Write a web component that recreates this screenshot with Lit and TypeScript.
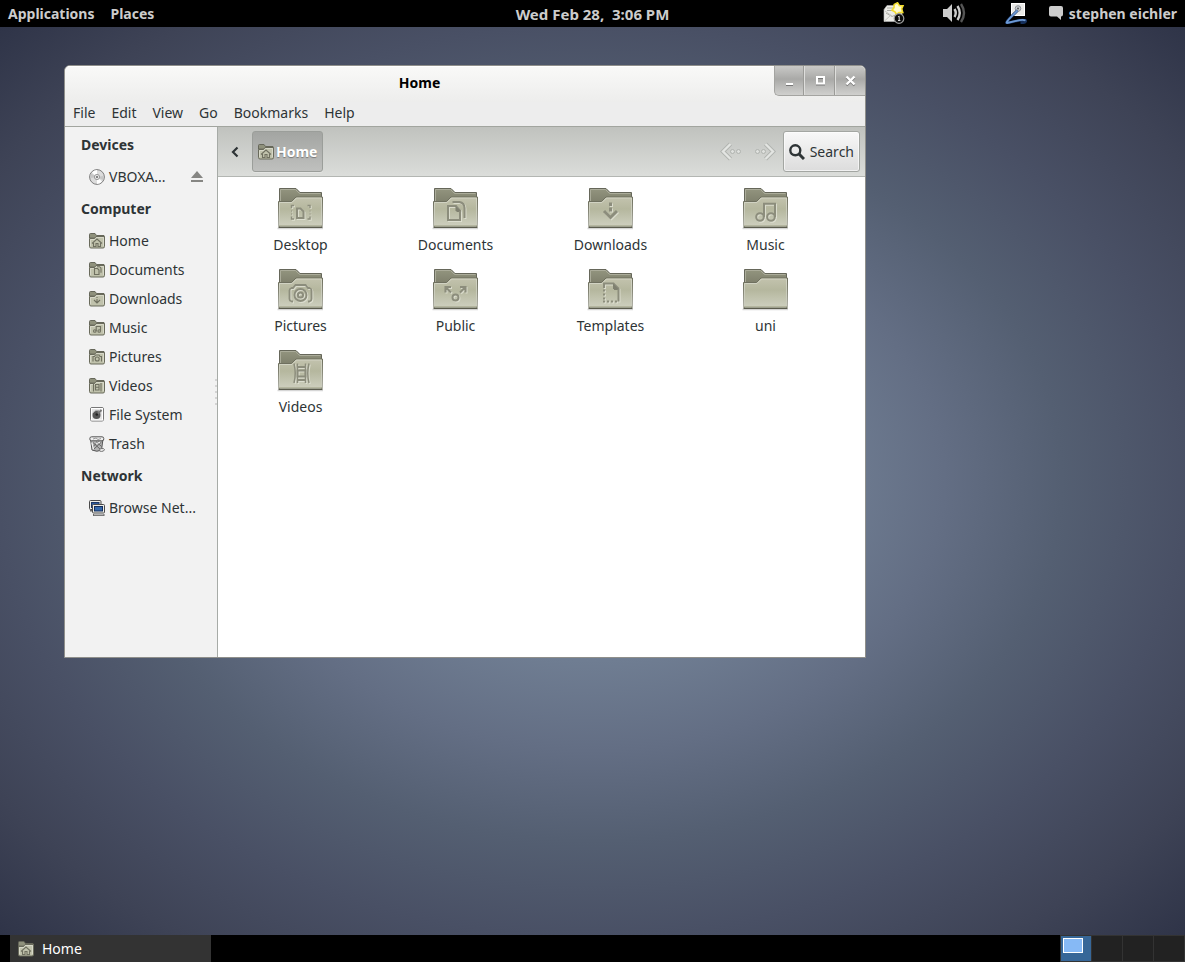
import { LitElement, html, svg, css, type TemplateResult } from "lit";
import { customElement } from "lit/decorators.js";

/* ---------- folder emblems, drawn on a 48 x 48 grid ---------- */
const emblems: Record<string, TemplateResult> = {
  desktop: svg`<path d="M15.500 24v-2.500h2.500M31.500 21.500h2.500v2.500M15.500 32.500v2.500h2.500M31.500 35h2.500v-2.500" stroke-width="1.400"/><path d="M15.500 26.500v4M34 26.500v4" stroke-width="1" stroke-dasharray="1 2"/><path d="M21 24.500h3.500l3 3v6.500h-6.500z" stroke-width="2"/>`,
  documents: svg`<path d="M17 22h8l4 4.500v9.500h-12z" stroke-width="2"/><path d="M24.500 22v5h5z" fill="#7f8070" stroke="none"/><path d="M21.500 18h7q5 1 5 6v10" stroke-width="2"/>`,
  downloads: svg`<path d="M24.500 18.500v3.500M24.500 23.500v4" stroke-width="3"/><path d="M18 27l6.500 6.500l6.500-6.500" stroke-width="3"/>`,
  music: svg`<circle cx="19" cy="33" r="3.800" stroke-width="2"/><circle cx="30" cy="33" r="3.800" stroke-width="2"/><path d="M23 33v-13.300h11v13.300" stroke-width="2"/>`,
  pictures: svg`<path d="M17 36.500h-1.500q-2-.5-2-2.500v-8.500q0-2 2-2.500h1.500l2.500-3h10l2.500 3h1.500q2 .5 2 2.500v8.500q0 2-2 2.500h-1.500" stroke-width="1.800"/><circle cx="24.500" cy="30" r="6" stroke-width="1.800"/><circle cx="24.500" cy="30" r="2.600" stroke-width="2"/>`,
  public: svg`<circle cx="24.500" cy="32.500" r="3" stroke-width="1.900"/><path d="M20 27.500l-5-5M14.500 27.500v-5.500h5.500M29 27.500l5-5M29 22h5.500v5.500" stroke-width="2.100"/>`,
  templates: svg`<path d="M18 23v-4.500h9.500l5 5v13" stroke-width="2"/><path d="M27 18.500v5.500h5.500z" fill="#7f8070" stroke="none"/><path d="M18 24.500v11" stroke-width="2" stroke-dasharray="2 2"/><path d="M17 36.500h15" stroke-width="2" stroke-dasharray="2 2"/>`,
  videos: svg`<path d="M18 17.500q2.500 10 0 19.500M33 17.500q-2.500 10 0 19.500" stroke-width="1.500"/><path d="M21.500 17.500v19.500M29.500 17.500v19.500" stroke-width="1.500"/><path d="M21.500 21h8M21.500 24.500h8v6h-8zM21.500 34h8" stroke-width="1.900"/>`,
  plain: svg``,
};

/* ---------- the same emblems on a 16 x 16 grid ---------- */
const smallEmblems: Record<string, TemplateResult> = {
  home: svg`<path d="M3 10.500l5-4.500l5 4.500M4.500 10v3.500h2.500v-3h2v3h2.500v-3.500"/>`,
  documents: svg`<path d="M5.500 6.500h3l1.500 1.500v4.500h-4.500zM8 4.800h2.500q1.500.5 1.500 2v4"/>`,
  downloads: svg`<path d="M8 6v1M8 8v3M5 9l3 3l3-3"/>`,
  music: svg`<circle cx="5.800" cy="11" r="1.300"/><circle cx="10.200" cy="11" r="1.300"/><path d="M7.200 11v-4.500h4.300v4.500"/>`,
  pictures: svg`<path d="M4 12.500v-5h1.500l1-1.500h3.500l1 1.500h1.500v5"/><circle cx="8.200" cy="10" r="2"/>`,
  videos: svg`<path d="M4.500 5v8.500M12 5v8.500"/><path d="M6.500 6.500h3.500v5.500h-3.500zM6.500 9.200h3.500"/>`,
};

const folder = (kind: string) => svg`
  <svg class="folder" width="48" height="48" viewBox="1 0 48 48" aria-hidden="true">
    <defs>
      <linearGradient id="front" x1="0" y1="0" x2="0" y2="1">
        <stop offset="0" stop-color="#c3c3ae"/><stop offset=".4" stop-color="#b5b79e"/>
        <stop offset=".8" stop-color="#c6c8b5"/><stop offset="1" stop-color="#cfd0c0"/>
      </linearGradient>
      <linearGradient id="back" x1="0" y1="0" x2="0" y2="1">
        <stop offset="0" stop-color="#93957f"/><stop offset="1" stop-color="#7b7c69"/>
      </linearGradient>
    </defs>
    <path d="M1.500 44.500h45.500" stroke="#000" stroke-opacity=".16" stroke-width="1.500"/>
    <path d="M3.500 20v-15.500h16.500l4 4h21.500v12z" fill="url(#back)" stroke="#66675a"/>
    <path d="M4.500 20v-14.500h15l4 4h21" fill="none" stroke="#abac9a"/>
    <path d="M2.500 17.500h13l4.500-4.500h26.500l-.5 30h-43z" fill="url(#front)" stroke="#6f705f"/>
    <path d="M3.500 41v-22.500h12.500l4.500-4.500h25v27" fill="none" stroke="#dadbce" stroke-opacity=".7"/>
    <path d="M3 41.500h42.500" stroke="#b4b69f" stroke-width="1"/>
    <path d="M2.500 43.500h44" stroke="#5b5c4e" stroke-width="1"/>
    <g fill="none" stroke="#e2e3d7" stroke-opacity=".8" transform="translate(1 1)">${emblems[kind]}</g>
    <g fill="none" stroke="#8c8d7c">${emblems[kind]}</g>
  </svg>`;

const smallFolder = (kind: string) => svg`
  <svg class="glyph" width="16" height="16" viewBox="0 0 16 16" aria-hidden="true">
    <path d="M.5 5v-3.500q0-1 1-1h4.500l1.500 2h7.500v3z" fill="#8f917c" stroke="#66675a"/>
    <path d="M.5 5.500h5l1.500-2h8.500v10q0 1.500-1.500 1.500h-12q-1.500 0-1.500-1.500z" fill="#c0c2ac" stroke="#696a5b"/>
    <path d="M1.500 13v-6.500h4.500l1.500-2h7v8.500" fill="none" stroke="#dcddd0" stroke-opacity=".8"/>
    <g fill="none" stroke="#6f7060" stroke-width="1.100">${smallEmblems[kind]}</g>
  </svg>`;

const discIcon = svg`
  <svg class="glyph" width="16" height="16" viewBox="0 0 16 16" aria-hidden="true">
    <circle cx="8" cy="8" r="7.400" fill="#dcdcdc" stroke="#7d7d7d"/>
    <path d="M8 8L3 3.500A7 7 0 0 1 8 1zM8 8l5 4.500A7 7 0 0 1 8 15z" fill="#fff"/>
    <path d="M8 8L1.500 9A7 7 0 0 1 2 4.500zM8 8l6.500-1A7 7 0 0 1 14 11z" fill="#c6c6c6"/>
    <circle cx="8" cy="8" r="2.600" fill="#e8e8e8" stroke="#9a9a9a"/>
    <circle cx="8" cy="8" r="1" fill="#666"/>
  </svg>`;

const driveIcon = svg`
  <svg class="glyph" width="16" height="16" viewBox="0 0 16 16" aria-hidden="true">
    <rect x="1.500" y=".5" width="13" height="13.500" rx="1.500" fill="#e4e4e4" stroke="#777"/>
    <rect x="2.500" y="1.500" width="11" height="11.500" fill="none" stroke="#fff"/>
    <ellipse cx="7.500" cy="8" rx="4" ry="4" fill="#555"/>
    <path d="M8 7.500l4.500-4.500" stroke="#777" stroke-width="2"/>
    <circle cx="7.800" cy="7.500" r="1.300" fill="#222"/>
    <path d="M4 6q2-4 6-2.500" fill="none" stroke="#aaa"/>
  </svg>`;

const trashIcon = svg`
  <svg class="glyph" width="16" height="16" viewBox="0 0 16 16" aria-hidden="true">
    <path d="M1.500 3l1.500 11q5 2.500 9.500 0l1.500-11z" fill="#b4b4b4" stroke="#555"/>
    <rect x=".8" y=".8" width="14" height="4" rx="1.800" fill="#eee" stroke="#555"/>
    <path d="M4 3l3-1l2 1.500l3-1" fill="none" stroke="#999"/>
    <path d="M4 6.500l8 7.500M7 5.500l5.500 5M12.500 6l-8 7.500M9.500 5.500l-6 5.500" stroke="#5c5c5c" stroke-width=".9"/>
    <path d="M2.800 6.500l1.700 7M7 7.500l4-1" stroke="#f5f5f5" stroke-width="1.200"/>
    <path d="M10.500 15q-.5-2 1.500-2.500q3-.5 3.500 1q-.5 2-3 2z" fill="#e4e4e4" stroke="#777"/>
  </svg>`;

const networkIcon = svg`
  <svg class="glyph" width="16" height="16" viewBox="0 0 16 16" aria-hidden="true">
    <path d="M1 10.500h6" stroke="#666" stroke-width="2"/>
    <rect x=".5" y=".5" width="11.500" height="9" rx="1" fill="#eeeee8" stroke="#4a4a4a"/>
    <rect x="2.500" y="2.500" width="7.500" height="5" fill="#2d5a9c" stroke="#1d3763"/>
    <rect x="3.500" y="4.500" width="12" height="8.500" rx="1" fill="#eeeee8" stroke="#4a4a4a"/>
    <rect x="5.500" y="6.500" width="8" height="4.500" fill="#3468ab" stroke="#152f5c"/>
    <path d="M4 15h11.500" stroke="#5a5a5a" stroke-width="1.800"/><path d="M5 14.700h9.500" stroke="#ddd" stroke-width=".8"/>
  </svg>`;

const ejectIcon = svg`
  <svg width="12" height="12" viewBox="0 0 12 12" aria-hidden="true">
    <path d="M0 7L6 0l6 7z" fill="#868683"/><path d="M0 9h12v2H0z" fill="#868683"/>
  </svg>`;

const mailIcon = svg`
  <svg width="22" height="22" viewBox="0 0 22 22" aria-hidden="true">
    <path d="M1 7.500l3-4h13l2 4v12h-18z" fill="#ecece8" stroke="#bbb" stroke-width=".6"/>
    <path d="M4 6h10M4 8.500h10M3 11l6 3.500l8-3.500" fill="none" stroke="#a9a9a4"/>
    <path d="M1.500 19l6.500-6M2 9l7 5" stroke="#c4c4be"/>
    <path d="M14.500 .8l1.900 2.800l3.600.1l-1.400 3.200l1.200 3.500l-3.800.2l-2.500 1.700l-1.600-2.500l-2.900-1.600l2-2.600l.2-3.200z" fill="#fffbd0" stroke="#f3dc2d" stroke-width="1.600"/>
    <circle cx="16" cy="16.500" r="4.800" fill="#0b0b0b" stroke="#9b9b9b" stroke-width="1.200"/>
    <path d="M15 15l1.200-.8v4.300M15 18.500h2.400" fill="none" stroke="#ddd"/>
  </svg>`;

const volumeIcon = svg`
  <svg width="24" height="20" viewBox="0 0 24 20" aria-hidden="true">
    <path d="M0 6h4l5-5v18l-5-5h-4z" fill="#ccc"/>
    <path d="M11.500 6q2.500 4 0 8" fill="none" stroke="#ccc" stroke-width="2.400"/>
    <path d="M14.500 3q4.500 7 0 14" fill="none" stroke="#ccc" stroke-width="2.400"/>
    <path d="M18 1q6 9 0 18" fill="none" stroke="#555" stroke-width="2.400"/>
  </svg>`;

const tabletIcon = svg`
  <svg width="22" height="22" viewBox="0 0 22 22" aria-hidden="true">
    <rect x="6.500" y="1.500" width="13" height="12" fill="#e9e9e6" stroke="#fff"/>
    <circle cx="13" cy="6.500" r="2.800" fill="#c9ccd0" stroke="#8d9196"/>
    <circle cx="13" cy="6.500" r="1" fill="#555"/>
    <path d="M12.500 8.500l-8 8q-4 4.500-2.500 4.500l9-2q7-1.500 9.500-.5q1 2-5 2.500" fill="none" stroke="#16305c" stroke-width="2.800"/>
    <path d="M12.500 8.500l-8 8q-4 4.500-2.500 4.500l9-2q7-2 9.500-.5" fill="none" stroke="#6d9ad6" stroke-width="1.800"/>
  </svg>`;

const chatIcon = svg`
  <svg width="14" height="14" viewBox="0 0 14 14" aria-hidden="true">
    <path d="M2 0h10q2 0 2 2v6.500q0 2-2 2v3.500l-4-3.500h-6q-2 0-2-2v-6.500q0-2 2-2z" fill="#ccc"/>
  </svg>`;

const backIcon = svg`
  <svg width="8" height="12" viewBox="0 0 8 12" aria-hidden="true">
    <path d="M6.500 1.500L2 6l4.500 4.500" fill="none" stroke="#2e3436" stroke-width="2.200"/>
  </svg>`;

const arrowHead = svg`<path d="M10.500 2L3 9.500L10.500 17"/>`;
const navArrow = (forward: boolean) => svg`
  <svg width="22" height="20" viewBox="0 0 22 20" aria-hidden="true">
    <g fill="none" transform=${forward ? "translate(22 0) scale(-1 1)" : "translate(0 0)"}>
      <g stroke="#b0b3af" stroke-width="4.200">${arrowHead}</g>
      <g stroke="#e3e5e2" stroke-width="2.400">${arrowHead}</g>
      <circle cx="12.500" cy="9.500" r="2" fill="#dfe1de" stroke="#b0b3af"/>
      <circle cx="18.500" cy="9.500" r="2" fill="#dfe1de" stroke="#b0b3af"/>
    </g>
  </svg>`;

const searchIcon = svg`
  <svg width="16" height="16" viewBox="0 0 16 16" aria-hidden="true">
    <circle cx="6.300" cy="6.300" r="5" fill="none" stroke="#2e3436" stroke-width="2.400"/>
    <path d="M10 10l5 5" stroke="#2e3436" stroke-width="3"/>
  </svg>`;

const windowGlyphs: Array<[string, TemplateResult]> = [
  ["Minimize", svg`<path d="M2 8h7v2h-7z" fill="#fff"/>`],
  ["Maximize", svg`<path d="M2 2h7v6.500h-7z" fill="none" stroke="#fff" stroke-width="2"/>`],
  ["Close", svg`<path d="M1.500 1.500l8 8M9.500 1.500l-8 8" stroke="#fff" stroke-width="2.400"/>`],
];

const menus = ["File", "Edit", "View", "Go", "Bookmarks", "Help"];

const places: Array<{ title: string; rows: Array<{ label: string; icon: TemplateResult; eject?: boolean }> }> = [
  { title: "Devices", rows: [{ label: "VBOXA...", icon: discIcon, eject: true }] },
  {
    title: "Computer",
    rows: [
      { label: "Home", icon: smallFolder("home") },
      { label: "Documents", icon: smallFolder("documents") },
      { label: "Downloads", icon: smallFolder("downloads") },
      { label: "Music", icon: smallFolder("music") },
      { label: "Pictures", icon: smallFolder("pictures") },
      { label: "Videos", icon: smallFolder("videos") },
      { label: "File System", icon: driveIcon },
      { label: "Trash", icon: trashIcon },
    ],
  },
  { title: "Network", rows: [{ label: "Browse Net...", icon: networkIcon }] },
];

const files: Array<[string, string]> = [
  ["Desktop", "desktop"], ["Documents", "documents"], ["Downloads", "downloads"], ["Music", "music"],
  ["Pictures", "pictures"], ["Public", "public"], ["Templates", "templates"], ["uni", "plain"],
  ["Videos", "videos"],
];

const reset = css`
  * { box-sizing: border-box; }
  button {
    font: inherit; color: inherit; background: none; border: 0; margin: 0; padding: 0;
  }
  a { color: inherit; text-decoration: none; }
  svg { display: block; flex: none; }
`;

@customElement("file-window")
export class FileWindow extends LitElement {
  static styles = [reset, css`
    :host {
      display: flex; flex-direction: column;
      border: 1px solid #8f8f8b; border-radius: 6px 6px 0 0;
      background: #ededed; color: #2e3436; overflow: hidden;
    }
    .titlebar {
      display: flex; height: 36px; flex: none;
      background: linear-gradient(#f9f9f8, #ededec);
      box-shadow: inset 0 1px #fff;
    }
    .title {
      flex: 1; margin: 0; text-align: center; font-size: 14px; line-height: 34px; font-weight: 700;
      color: #000;
    }
    .controls {
      display: flex; height: 30px; border: 1px solid #a4a4a1; border-width: 0 0 1px 1px;
      border-radius: 0 0 0 5px; overflow: hidden;
      background: linear-gradient(#c9c9c7, #a9a9a7 45%, #b4b4b2 60%, #d0d0ce);
    }
    .control { width: 29px; display: grid; place-items: center; }
    .control + .control { width: 31px; border-left: 1px solid #dededc; box-shadow: -1px 0 #9b9b98; }
    .control + .control + .control { width: 30px; }
    .control svg { filter: drop-shadow(0 1px 0 #777); }
    .menubar { display: flex; height: 25px; flex: none; border-bottom: 1px solid #a2a59f; }
    .menu { padding: 0 8px; height: 22px; line-height: 22px; }
    .body { display: flex; flex: 1; min-height: 0; }
    .sidebar {
      position: relative; width: 153px; flex: none; background: #f2f2f2; border-right: 1px solid #a7aba7;
    }
    .heading { margin: 0; padding-left: 16px; font-size: 14px; line-height: 36px; height: 35px; font-weight: 700; }
    .row { display: flex; align-items: center; height: 29px; padding: 0 14px 0 24px; }
    .place { display: flex; flex: 1; align-items: center; gap: 4px; white-space: nowrap; line-height: 28px; }
    .grip {
      position: absolute; right: 0; top: calc(50% - 13px); width: 2px; height: 26px;
      background: repeating-linear-gradient(#d4d4d4 0 2px, transparent 2px 6px);
    }
    .main { display: flex; flex-direction: column; flex: 1; min-width: 0; background: #fff; }
    .toolbar {
      display: flex; align-items: center; height: 50px; flex: none; padding: 0 5px 0 0;
      border-bottom: 1px solid #b3b6b2; background: linear-gradient(#c0c2be, #dbddda);
    }
    .back { width: 34px; height: 40px; display: grid; place-items: center; }
    .crumb {
      display: flex; align-items: center; gap: 2px; height: 41px; padding: 0 5px;
      border: 1px solid #9b9e9a; border-radius: 3px; color: #fff; font-weight: 700;
      background: linear-gradient(#a3a5a2, #bfc0be); text-shadow: 0 1px 1px #777; box-shadow: 0 1px #e3e4e2;
    }
    .nav { display: flex; gap: 12px; margin-left: auto; margin-right: 7px; }
    .search {
      display: flex; align-items: center; gap: 5px; height: 41px; padding: 0 5px;
      border: 1px solid #a3a6a2; border-radius: 3px; background: linear-gradient(#f8f8f8, #dcdcdc);
      box-shadow: inset 0 0 0 1px #ffffff99;
    }
    .files {
      display: grid; grid-template-columns: repeat(auto-fill, 155px); grid-auto-rows: 81px;
      align-content: start; padding: 7px 0 0 5px; flex: 1;
    }
    .file { display: flex; flex-direction: column; align-items: center; gap: 3px; }
    .label { line-height: 20px; }
  `];

  render() {
    return html`
      <header class="titlebar">
        <h1 class="title">Home</h1>
        <div class="controls">
          ${windowGlyphs.map(([name, glyph]) => html`
            <button class="control" aria-label=${name}>
              <svg width="11" height="11" viewBox="0 0 11 11" aria-hidden="true">${glyph}</svg>
            </button>`)}
        </div>
      </header>
      <nav class="menubar">${menus.map((m) => html`<button class="menu">${m}</button>`)}</nav>
      <div class="body">
        <nav class="sidebar">
          ${places.map((group) => html`
            <h2 class="heading">${group.title}</h2>
            ${group.rows.map((r) => html`
              <div class="row">
                <a class="place" href="#">${r.icon}<span>${r.label}</span></a>
                ${r.eject ? html`<button aria-label="Eject">${ejectIcon}</button>` : null}
              </div>`)}`)}
          <div class="grip"></div>
        </nav>
        <section class="main">
          <div class="toolbar">
            <button class="back" aria-label="Scroll path">${backIcon}</button>
            <button class="crumb">${smallFolder("home")}<span>Home</span></button>
            <div class="nav">
              <button aria-label="Back" disabled>${navArrow(false)}</button>
              <button aria-label="Forward" disabled>${navArrow(true)}</button>
            </div>
            <button class="search">${searchIcon}<span>Search</span></button>
          </div>
          <div class="files">
            ${files.map(([label, kind]) => html`
              <button class="file">${folder(kind)}<span class="label">${label}</span></button>`)}
          </div>
        </section>
      </div>`;
  }
}

@customElement("app-root")
export class AppRoot extends LitElement {
  static styles = [reset, css`
    :host {
      display: flex; flex-direction: column; height: 100vh; overflow: hidden;
      font: 14px/20px "Noto Sans", "Open Sans", sans-serif; background: #000;
    }
    .panel {
      display: grid; grid-template-columns: 1fr auto 1fr; align-items: center; height: 27px; flex: none;
      padding: 0 8px; background: #000; color: #ccc; font-weight: 700; line-height: 28px;
    }
    .launchers { display: flex; gap: 16px; }
    .clock { white-space: pre; font-size: 15px; }
    .status { display: flex; align-items: center; justify-content: flex-end; }
    .status svg { margin-bottom: 2px; }
    .applets { display: flex; align-items: center; gap: 38px; margin-right: 22px; }
    .user { display: flex; align-items: center; gap: 6px; }
    .desktop {
      position: relative; flex: 1; min-height: 0;
      background: radial-gradient(ellipse farthest-corner at 50% 50%,
        #78869b 0, #6f7d92 28%, #636e84 42%, #545f72 56%, #495065 71%, #3e4356 86%, #2f3448 100%);
    }
    .window { position: absolute; left: 64px; top: 38px; width: 802px; height: 593px; }
    .taskbar { display: flex; justify-content: space-between; height: 27px; flex: none; padding-left: 10px; background: #000; }
    .task {
      display: flex; align-items: center; gap: 8px; width: 201px; padding: 0 8px;
      background: #333; color: #fff; line-height: 28px;
    }
    .pager { display: flex; gap: 1px; padding: 1px; background: #333; }
    .space { width: 30px; background: #222; }
    .current { display: flex; padding: 2px; background: #376798; }
    .mini { width: 20px; height: 15px; border: 1px solid #fff; background: #86b9f5; }
  `];

  render() {
    return html`
      <header class="panel">
        <div class="launchers"><button>Applications</button><button>Places</button></div>
        <button class="clock">Wed Feb 28,  3:06 PM</button>
        <div class="status">
          <div class="applets">
            <button aria-label="Mail">${mailIcon}</button>
            <button aria-label="Volume">${volumeIcon}</button>
            <button aria-label="Tablet">${tabletIcon}</button>
          </div>
          <button class="user">${chatIcon}<span>stephen eichler</span></button>
        </div>
      </header>
      <main class="desktop"><file-window class="window"></file-window></main>
      <footer class="taskbar">
        <button class="task">${smallFolder("home")}<span>Home</span></button>
        <div class="pager">
          <button class="space current" aria-label="Workspace 1"><span class="mini"></span></button>
          <button class="space" aria-label="Workspace 2"></button>
          <button class="space" aria-label="Workspace 3"></button>
          <button class="space" aria-label="Workspace 4"></button>
        </div>
      </footer>`;
  }
}
